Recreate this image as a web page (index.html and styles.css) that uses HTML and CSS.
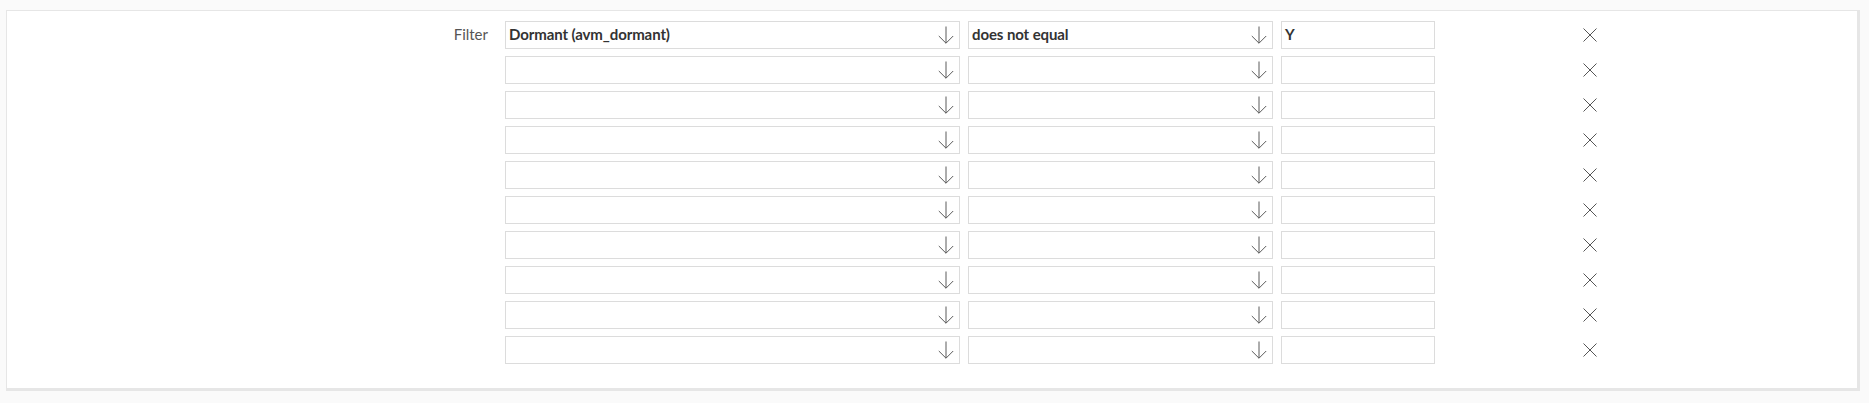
FILE: index.html
```html
<!DOCTYPE html>
<html lang="en">
<head>
<meta charset="utf-8">
<title>Filter</title>
<link rel="stylesheet" href="styles.css">
</head>
<body>
<div class="panel">
  <div class="filters">
    <div class="label">Filter</div>
    <div class="rows">
      <div class="row">
        <div class="select field-col"><span class="value">Dormant (avm_dormant)</span><svg class="arrow" width="16" height="18" viewBox="0 0 16 18"><path d="M8 0.5V17.2M0.8 10L8 17.2L15.2 10"/></svg></div>
        <div class="select op-col"><span class="value">does not equal</span><svg class="arrow" width="16" height="18" viewBox="0 0 16 18"><path d="M8 0.5V17.2M0.8 10L8 17.2L15.2 10"/></svg></div>
        <div class="input"><span class="value">Y</span></div>
        <div class="remove"><svg class="cross" width="14" height="14" viewBox="0 0 14 14"><path d="M0.5 0.5L13.5 13.5M13.5 0.5L0.5 13.5"/></svg></div>
      </div>
      <div class="row">
        <div class="select field-col"><span class="value"></span><svg class="arrow" width="16" height="18" viewBox="0 0 16 18"><path d="M8 0.5V17.2M0.8 10L8 17.2L15.2 10"/></svg></div>
        <div class="select op-col"><span class="value"></span><svg class="arrow" width="16" height="18" viewBox="0 0 16 18"><path d="M8 0.5V17.2M0.8 10L8 17.2L15.2 10"/></svg></div>
        <div class="input"><span class="value"></span></div>
        <div class="remove"><svg class="cross" width="14" height="14" viewBox="0 0 14 14"><path d="M0.5 0.5L13.5 13.5M13.5 0.5L0.5 13.5"/></svg></div>
      </div>
      <div class="row">
        <div class="select field-col"><span class="value"></span><svg class="arrow" width="16" height="18" viewBox="0 0 16 18"><path d="M8 0.5V17.2M0.8 10L8 17.2L15.2 10"/></svg></div>
        <div class="select op-col"><span class="value"></span><svg class="arrow" width="16" height="18" viewBox="0 0 16 18"><path d="M8 0.5V17.2M0.8 10L8 17.2L15.2 10"/></svg></div>
        <div class="input"><span class="value"></span></div>
        <div class="remove"><svg class="cross" width="14" height="14" viewBox="0 0 14 14"><path d="M0.5 0.5L13.5 13.5M13.5 0.5L0.5 13.5"/></svg></div>
      </div>
      <div class="row">
        <div class="select field-col"><span class="value"></span><svg class="arrow" width="16" height="18" viewBox="0 0 16 18"><path d="M8 0.5V17.2M0.8 10L8 17.2L15.2 10"/></svg></div>
        <div class="select op-col"><span class="value"></span><svg class="arrow" width="16" height="18" viewBox="0 0 16 18"><path d="M8 0.5V17.2M0.8 10L8 17.2L15.2 10"/></svg></div>
        <div class="input"><span class="value"></span></div>
        <div class="remove"><svg class="cross" width="14" height="14" viewBox="0 0 14 14"><path d="M0.5 0.5L13.5 13.5M13.5 0.5L0.5 13.5"/></svg></div>
      </div>
      <div class="row">
        <div class="select field-col"><span class="value"></span><svg class="arrow" width="16" height="18" viewBox="0 0 16 18"><path d="M8 0.5V17.2M0.8 10L8 17.2L15.2 10"/></svg></div>
        <div class="select op-col"><span class="value"></span><svg class="arrow" width="16" height="18" viewBox="0 0 16 18"><path d="M8 0.5V17.2M0.8 10L8 17.2L15.2 10"/></svg></div>
        <div class="input"><span class="value"></span></div>
        <div class="remove"><svg class="cross" width="14" height="14" viewBox="0 0 14 14"><path d="M0.5 0.5L13.5 13.5M13.5 0.5L0.5 13.5"/></svg></div>
      </div>
      <div class="row">
        <div class="select field-col"><span class="value"></span><svg class="arrow" width="16" height="18" viewBox="0 0 16 18"><path d="M8 0.5V17.2M0.8 10L8 17.2L15.2 10"/></svg></div>
        <div class="select op-col"><span class="value"></span><svg class="arrow" width="16" height="18" viewBox="0 0 16 18"><path d="M8 0.5V17.2M0.8 10L8 17.2L15.2 10"/></svg></div>
        <div class="input"><span class="value"></span></div>
        <div class="remove"><svg class="cross" width="14" height="14" viewBox="0 0 14 14"><path d="M0.5 0.5L13.5 13.5M13.5 0.5L0.5 13.5"/></svg></div>
      </div>
      <div class="row">
        <div class="select field-col"><span class="value"></span><svg class="arrow" width="16" height="18" viewBox="0 0 16 18"><path d="M8 0.5V17.2M0.8 10L8 17.2L15.2 10"/></svg></div>
        <div class="select op-col"><span class="value"></span><svg class="arrow" width="16" height="18" viewBox="0 0 16 18"><path d="M8 0.5V17.2M0.8 10L8 17.2L15.2 10"/></svg></div>
        <div class="input"><span class="value"></span></div>
        <div class="remove"><svg class="cross" width="14" height="14" viewBox="0 0 14 14"><path d="M0.5 0.5L13.5 13.5M13.5 0.5L0.5 13.5"/></svg></div>
      </div>
      <div class="row">
        <div class="select field-col"><span class="value"></span><svg class="arrow" width="16" height="18" viewBox="0 0 16 18"><path d="M8 0.5V17.2M0.8 10L8 17.2L15.2 10"/></svg></div>
        <div class="select op-col"><span class="value"></span><svg class="arrow" width="16" height="18" viewBox="0 0 16 18"><path d="M8 0.5V17.2M0.8 10L8 17.2L15.2 10"/></svg></div>
        <div class="input"><span class="value"></span></div>
        <div class="remove"><svg class="cross" width="14" height="14" viewBox="0 0 14 14"><path d="M0.5 0.5L13.5 13.5M13.5 0.5L0.5 13.5"/></svg></div>
      </div>
      <div class="row">
        <div class="select field-col"><span class="value"></span><svg class="arrow" width="16" height="18" viewBox="0 0 16 18"><path d="M8 0.5V17.2M0.8 10L8 17.2L15.2 10"/></svg></div>
        <div class="select op-col"><span class="value"></span><svg class="arrow" width="16" height="18" viewBox="0 0 16 18"><path d="M8 0.5V17.2M0.8 10L8 17.2L15.2 10"/></svg></div>
        <div class="input"><span class="value"></span></div>
        <div class="remove"><svg class="cross" width="14" height="14" viewBox="0 0 14 14"><path d="M0.5 0.5L13.5 13.5M13.5 0.5L0.5 13.5"/></svg></div>
      </div>
      <div class="row">
        <div class="select field-col"><span class="value"></span><svg class="arrow" width="16" height="18" viewBox="0 0 16 18"><path d="M8 0.5V17.2M0.8 10L8 17.2L15.2 10"/></svg></div>
        <div class="select op-col"><span class="value"></span><svg class="arrow" width="16" height="18" viewBox="0 0 16 18"><path d="M8 0.5V17.2M0.8 10L8 17.2L15.2 10"/></svg></div>
        <div class="input"><span class="value"></span></div>
        <div class="remove"><svg class="cross" width="14" height="14" viewBox="0 0 14 14"><path d="M0.5 0.5L13.5 13.5M13.5 0.5L0.5 13.5"/></svg></div>
      </div>
    </div>
  </div>
</div>
</body>
</html>
```

FILE: styles.css
```css
* { box-sizing: border-box; }

html, body {
  margin: 0;
  padding: 0;
  background: #fafafa;
  font-family: Lato, "Open Sans", sans-serif;
}

.panel {
  margin: 10px 9px 12px 6px;
  width: 1854px;
  height: 381px;
  background: #fff;
  border: 1px solid #e6e6e6;
  border-right-width: 3px;
  border-bottom-width: 3px;
  padding: 10px 0 0 0;
}

.filters {
  display: flex;
  align-items: flex-start;
}

.label {
  width: 481px;
  height: 28px;
  line-height: 27px;
  text-align: right;
  font-size: 15px;
  color: #555;
  margin-right: 17px;
}

.rows {
  display: flex;
  flex-direction: column;
  gap: 7px;
}

.row {
  display: flex;
  align-items: center;
  height: 28px;
}

.select, .input {
  height: 28px;
  border: 1px solid #dcdcdc;
  background: #fff;
  display: flex;
  align-items: center;
  padding: 0 0 0 3px;
  font-size: 15px;
  font-weight: 700;
  color: #333;
  letter-spacing: -0.1px;
}

.field-col { width: 455px; margin-right: 8px; }
.op-col { width: 305px; margin-right: 8px; }
.input { width: 154px; }

.value {
  flex: 1;
  white-space: nowrap;
  position: relative;
  top: -1px;
}

.arrow {
  flex: none;
  margin-right: 5px;
}

.arrow path {
  fill: none;
  stroke: #5a5a5a;
  stroke-width: 1;
}

.remove {
  margin-left: 148px;
  width: 14px;
  height: 14px;
  display: flex;
}

.cross path {
  fill: none;
  stroke: #555;
  stroke-width: 1;
}
```
